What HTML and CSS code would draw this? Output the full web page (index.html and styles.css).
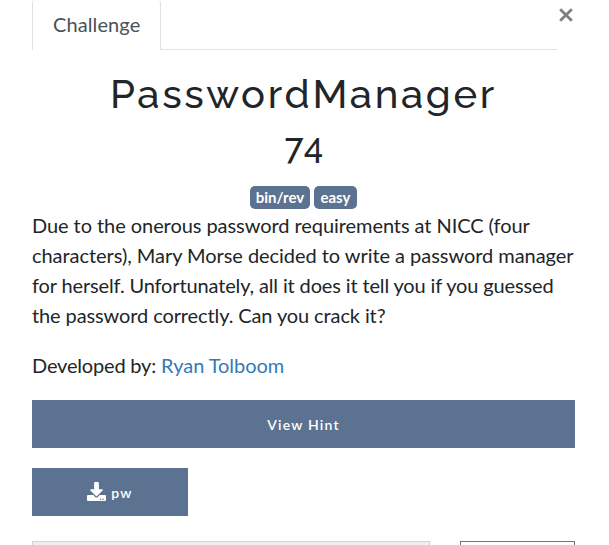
FILE: index.html
```html
<!DOCTYPE html>
<html lang="en">
<head>
<meta charset="utf-8">
<title>PasswordManager</title>
<link rel="stylesheet" href="styles.css">
</head>
<body>
<main class="modal">
  <header class="tabs">
    <span class="tab">Challenge</span>
    <span class="tab-line"></span>
    <button class="close" aria-label="Close"><svg width="14" height="14" viewBox="0 0 14 14"><path d="M1.2 1.2 12.8 12.8M12.8 1.2 1.2 12.8"/></svg></button>
  </header>
  <h2 class="name">PasswordManager</h2>
  <h3 class="value">74</h3>
  <div class="tags"><span class="badge rev">bin/rev</span><span class="badge easy">easy</span></div>
  <div class="desc">
    <p><span class="l1">Due to the onerous password requirements at NICC (four</span><br><span class="l2">characters), Mary Morse decided to write a password manager</span><br><span class="l3">for herself. Unfortunately, all it does it tell you if you guessed</span><br><span class="l4">the password correctly. Can you crack it?</span></p>
    <p class="credit">Developed by: <a>Ryan Tolboom</a></p>
  </div>
  <button class="btn hint">View Hint</button>
  <button class="btn file"><svg width="19" height="19" viewBox="0 0 512 512"><path d="M216 0h80c13.300 0 24 10.700 24 24v168h87.700c17.800 0 26.700 21.500 14.100 34.100L269.700 378.300c-7.500 7.500-19.800 7.500-27.300 0L90.100 226.100c-12.600-12.600-3.700-34.100 14.100-34.100H192V24c0-13.300 10.700-24 24-24zm296 376v112c0 13.300-10.700 24-24 24H24c-13.300 0-24-10.700-24-24V376c0-13.300 10.700-24 24-24h146.700l49 49c20.100 20.100 52.500 20.100 72.600 0l49-49H488c13.300 0 24 10.700 24 24zm-124 88c0-11-9-20-20-20s-20 9-20 20 9 20 20 20 20-9 20-20zm64 0c0-11-9-20-20-20s-20 9-20 20 9 20 20 20 20-9 20-20z"/></svg><span>pw</span></button>
  <div class="submit-row"><div class="flag"></div><div class="submit"></div></div>
</main>
</body>
</html>
```

FILE: styles.css
```css
* { box-sizing: border-box; }
html { overflow: hidden; }
body { margin: 0; height: 545px; overflow: hidden; background: #fff; color: #212529; font: 20px/30px Lato, sans-serif; }
.modal { width: 543px; height: 545px; margin-left: 32px; }
.tabs { display: flex; height: 50px; }
.tab { width: 129px; padding: 9px 0 0 20px; border: 1px solid #dee2e6; border-width: 0 1px; border-radius: 3px 3px 0 0; color: #495057; letter-spacing: .1px; }
.tab-line { width: 396px; border-bottom: 1px solid #dee2e6; }
.close { display: flex; width: 18px; height: 30px; margin-right: -2px; padding: 8px 0 0 2px; border: 0; background: none; }
.close svg { flex: none; fill: none; stroke: #7f7f7f; stroke-width: 2.8; }
h2, h3 { margin: 0; font-family: Raleway, Montserrat, sans-serif; font-weight: 500; text-align: center; letter-spacing: 2.7px; }
.name { margin-top: 20px; font-size: 40px; line-height: 48px; }
.value { margin-top: 8px; padding-left: 3px; font-size: 35px; line-height: 42px; letter-spacing: 2px; }
.tags { display: flex; justify-content: center; gap: 4px; margin-top: 18px; }
.badge { height: 23px; padding: 4px 0; border-radius: 5px; background: #5b7290; color: #fff; text-align: center; font: 700 15px/15px Lato, sans-serif; }
.rev { width: 60px; }
.easy { width: 43px; }
.desc { margin-top: 1px; }
.desc p { margin: 0 0 20px; white-space: nowrap; }
.desc a { color: #337ab7; letter-spacing: -.04px; }
.l1 { letter-spacing: -.065px; }
.l2 { letter-spacing: -.044px; }
.l3 { letter-spacing: -.14px; }
.l4 { letter-spacing: -.11px; }
.credit { letter-spacing: -.18px; }
.btn { display: flex; align-items: center; justify-content: center; height: 48px; margin: 0; padding: 0; border: 0; background: #5b7290; color: #fff; font: 600 14px/21px Lato, sans-serif; letter-spacing: 1.2px; }
.hint { width: 543px; }
.file { width: 156px; margin-top: 20px; gap: 5px; }
.file svg { margin-bottom: 2px; fill: #fff; }
.submit-row { display: flex; justify-content: space-between; height: 4px; margin-top: 25px; overflow: hidden; }
.flag { width: 398px; height: 48px; border: 1px solid #ced4da; background: #efefef; }
.submit { width: 115px; height: 48px; border: 1px solid #6c757d; }
```
